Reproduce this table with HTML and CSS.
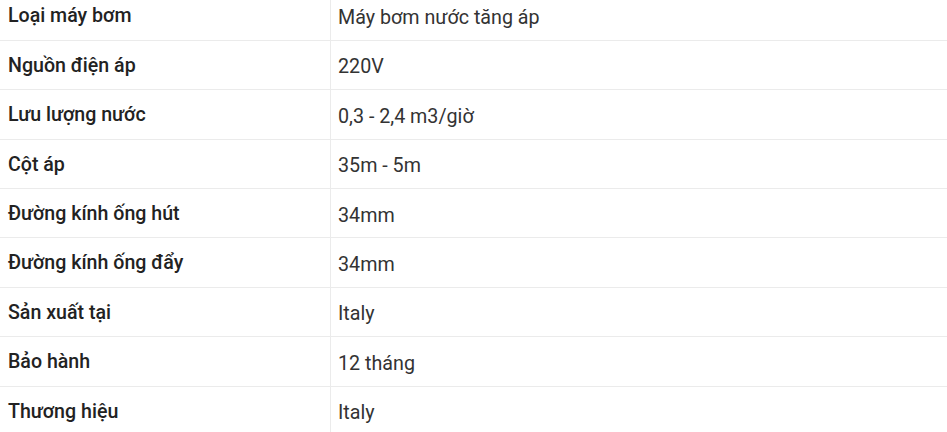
FILE: index.html
```html
<!DOCTYPE html>
<html lang="vi">
<head>
<meta charset="utf-8">
<link rel="stylesheet" href="styles.css">
</head>
<body>
<table class="spec">
  <tbody>
    <tr><td class="k">Loại máy bơm</td><td class="v">Máy bơm nước tăng áp</td></tr>
    <tr><td class="k">Nguồn điện áp</td><td class="v">220V</td></tr>
    <tr><td class="k">Lưu lượng nước</td><td class="v">0,3 - 2,4 m3/giờ</td></tr>
    <tr><td class="k">Cột áp</td><td class="v">35m - 5m</td></tr>
    <tr><td class="k">Đường kính ống hút</td><td class="v">34mm</td></tr>
    <tr><td class="k">Đường kính ống đẩy</td><td class="v">34mm</td></tr>
    <tr><td class="k">Sản xuất tại</td><td class="v">Italy</td></tr>
    <tr><td class="k">Bảo hành</td><td class="v">12 tháng</td></tr>
    <tr><td class="k">Thương hiệu</td><td class="v">Italy</td></tr>
  </tbody>
</table>
</body>
</html>
```
FILE: styles.css
```css
html, body {
  margin: 0;
  padding: 0;
  background: #fff;
  overflow: hidden;
}
.spec {
  width: 100%;
  border-collapse: collapse;
  margin-top: -8.6px;
  font-family: Roboto, "Noto Sans", sans-serif;
  font-size: 19.6px;
  line-height: 27px;
}
.spec td {
  border-bottom: 1px solid #ebebeb;
  vertical-align: top;
  padding: 11px 8px 10.4px;
  white-space: nowrap;
}
.spec .k {
  width: 314px;
  border-right: 1px solid #ebebeb;
  font-weight: 500;
  color: #222;
}
.spec .v {
  color: #333;
  font-size: 19.7px;
  padding-top: 12.7px;
  padding-bottom: 8.7px;
  padding-left: 7px;
}
```
